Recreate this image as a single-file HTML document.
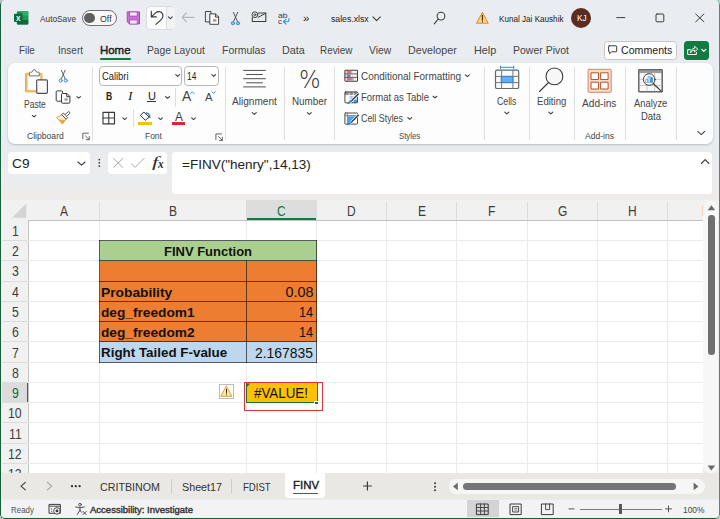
<!DOCTYPE html>
<html lang="en"><head><meta charset="utf-8"><title>sales.xlsx - Excel</title>
<style>
html,body{margin:0;padding:0;}
body{width:720px;height:519px;overflow:hidden;position:relative;background:#c4c6c8;font-family:'Liberation Sans', sans-serif;}
#app{position:absolute;left:0;top:0;width:720px;height:519px;overflow:hidden;border-radius:4.5px;background:#e9edf1;}
.sec{position:absolute;left:0;top:0;width:720px;height:519px;}
.b{position:absolute;box-sizing:border-box;}
.t{position:absolute;white-space:nowrap;transform-origin:0 50%;}
svg.ov{position:absolute;left:0;top:0;}
</style></head><body><div id="app">
<div class="sec" id="chrome">
<div class="b " style="left:0px;top:0px;width:720px;height:63px;background:#e9edf1;"></div>
<div class="b " style="left:8px;top:63.3px;width:705.4px;height:81.1px;background:#fdfdfd;border-radius:7px;box-shadow:0 1px 2.5px rgba(0,0,0,.22);"></div>
<div class="b " style="left:0px;top:146px;width:720px;height:54.5px;background:linear-gradient(#e8ebee 0%,#ebecee 55%,#eeece9 100%);"></div>
<div class="b " style="left:0px;top:200.2px;width:720px;height:20.2px;background:#f1f1f1;"></div>
<div class="b " style="left:28.3px;top:220.3px;width:675px;height:253px;background:#ffffff;"></div>
<div class="b " style="left:0px;top:220.3px;width:28.3px;height:253px;background:#f1f1f1;"></div>
</div>
<div class="sec" id="titlebar">
<span class="t" style="left:40.20px;top:12.25px;font-size:9.6px;line-height:13px;color:#333;transform:scaleX(0.8652);">AutoSave</span>
<div class="b " style="left:81.5px;top:9.8px;width:35.8px;height:16.4px;background:#fafafa;border:1px solid #707070;border-radius:9px;"></div>
<div class="b " style="left:84.1px;top:12.8px;width:10.5px;height:10.5px;background:#5f5f5f;border-radius:5.3px;"></div>
<span class="t" style="left:99.80px;top:12.25px;font-size:9.6px;line-height:13px;color:#333;transform:scaleX(0.9188);">Off</span>
<div class="b " style="left:145.8px;top:6.3px;width:29.5px;height:23.4px;background:#fbfcfd;border:1px solid #d9dde1;border-radius:4px;"></div>
<div class="b " style="left:165.5px;top:7.3px;width:9px;height:21.4px;background:#f1f3f5;border-left:1px solid #d9dde1;border-radius:0 3px 3px 0;"></div>
<span class="t" style="left:303.00px;top:12.25px;font-size:10px;line-height:13px;color:#222;transform:scaleX(1.1506);">»</span>
<span class="t" style="left:330.70px;top:12.25px;font-size:9.6px;line-height:13px;color:#222;transform:scaleX(0.9064);">sales.xlsx</span>
<span class="t" style="left:498.80px;top:12.25px;font-size:9.6px;line-height:13px;color:#222;transform:scaleX(0.8457);">Kunal Jai Kaushik</span>
<div class="b " style="left:571.2px;top:8px;width:20px;height:20px;background:#5b2c22;border-radius:10px;"></div>
<span class="t" style="left:576.50px;top:13.25px;font-size:8.2px;line-height:11px;color:#fff;transform:scaleX(1.0039);">KJ</span>
</div>
<div class="sec" id="ribbon-tabs">
<span class="t" style="left:19.20px;top:43.25px;font-size:11px;line-height:14px;color:#454545;transform:scaleX(0.8909);">File</span>
<span class="t" style="left:57.50px;top:43.25px;font-size:11px;line-height:14px;color:#454545;transform:scaleX(0.9086);">Insert</span>
<span class="t" style="left:146.50px;top:43.25px;font-size:11px;line-height:14px;color:#454545;transform:scaleX(0.9356);">Page Layout</span>
<span class="t" style="left:222.00px;top:43.25px;font-size:11px;line-height:14px;color:#454545;transform:scaleX(0.9511);">Formulas</span>
<span class="t" style="left:281.50px;top:43.25px;font-size:11px;line-height:14px;color:#454545;transform:scaleX(0.9806);">Data</span>
<span class="t" style="left:319.80px;top:43.25px;font-size:11px;line-height:14px;color:#454545;transform:scaleX(0.9008);">Review</span>
<span class="t" style="left:369.00px;top:43.25px;font-size:11px;line-height:14px;color:#454545;transform:scaleX(0.9427);">View</span>
<span class="t" style="left:408.00px;top:43.25px;font-size:11px;line-height:14px;color:#454545;transform:scaleX(0.9733);">Developer</span>
<span class="t" style="left:473.70px;top:43.25px;font-size:11px;line-height:14px;color:#454545;transform:scaleX(0.9856);">Help</span>
<span class="t" style="left:512.70px;top:43.25px;font-size:11px;line-height:14px;color:#454545;transform:scaleX(0.9540);">Power Pivot</span>
<span class="t" style="left:100.00px;top:43.25px;font-size:11px;line-height:14px;color:#1f1f1f;transform:scaleX(1.0394);-webkit-text-stroke:0.45px #1f1f1f;">Home</span>
<div class="b " style="left:100px;top:58px;width:30.5px;height:2.3px;background:#107c41;border-radius:1.2px;"></div>
<div class="b " style="left:604px;top:40.6px;width:72.6px;height:19px;background:#fdfdfd;border:1px solid #c6c6c6;border-radius:3.5px;"></div>
<span class="t" style="left:620.70px;top:43.25px;font-size:11.3px;line-height:14px;color:#222;transform:scaleX(0.9391);">Comments</span>
<div class="b " style="left:683.9px;top:40.6px;width:25.6px;height:19px;background:#107c41;border-radius:3.5px;"></div>
</div>
<div class="sec" id="ribbon">
<span class="t" style="left:23.80px;top:98.25px;font-size:10.1px;line-height:13px;color:#454545;transform:scaleX(0.8446);">Paste</span>
<span class="t" style="left:27.00px;top:129.25px;font-size:9.4px;line-height:13px;color:#454545;transform:scaleX(0.9168);">Clipboard</span>
<div class="b " style="left:92.0px;top:67px;width:1px;height:72.5px;background:#dedede;"></div>
<div class="b " style="left:99.1px;top:65.5px;width:82.5px;height:20.2px;background:#fff;border:1px solid #b5b5b5;border-radius:3.8px;"></div>
<div class="b " style="left:184.3px;top:65.5px;width:34.5px;height:20.2px;background:#fff;border:1px solid #b5b5b5;border-radius:3.8px;"></div>
<span class="t" style="left:101.50px;top:69.25px;font-size:10.6px;line-height:14px;color:#222;transform:scaleX(0.8824);">Calibri</span>
<span class="t" style="left:187.00px;top:69.25px;font-size:10.6px;line-height:14px;color:#222;transform:scaleX(0.7883);">14</span>
<span class="t" style="left:106.30px;top:89.25px;font-size:11px;line-height:14px;color:#222;font-weight:700;transform:scaleX(0.7796);">B</span>
<span class="t" style="left:128.00px;top:89.25px;font-size:11.5px;line-height:14px;color:#222;font-family:'Liberation Serif', serif;font-style:italic;transform:scaleX(1.1707);">I</span>
<span class="t" style="left:147.50px;top:89.25px;font-size:10.6px;line-height:14px;color:#222;transform:scaleX(1.0449);">U</span>
<div class="b " style="left:147.2px;top:101.3px;width:8.6px;height:1px;background:#333;"></div>
<div class="b " style="left:174.7px;top:88px;width:1px;height:18.5px;background:#dedede;"></div>
<span class="t" style="left:181.90px;top:86.25px;font-size:15.2px;line-height:19px;color:#444;transform:scaleX(0.9072);">A</span>
<span class="t" style="left:204.80px;top:90.25px;font-size:11.4px;line-height:14px;color:#444;transform:scaleX(0.9856);">A</span>
<div class="b " style="left:133.0px;top:108.8px;width:1px;height:17.799999999999997px;background:#dedede;"></div>
<span class="t" style="left:174.70px;top:109.25px;font-size:12.5px;line-height:16px;color:#3a3a3a;transform:scaleX(0.9468);">A</span>
<div class="b " style="left:171.9px;top:121.8px;width:13.4px;height:2.9px;background:#e3242b;"></div>
<div class="b " style="left:138px;top:121.8px;width:14px;height:2.8px;background:#f4c20d;"></div>
<span class="t" style="left:144.50px;top:129.25px;font-size:9.4px;line-height:13px;color:#454545;transform:scaleX(0.8953);">Font</span>
<div class="b " style="left:225.0px;top:67px;width:1px;height:72.5px;background:#dedede;"></div>
<span class="t" style="left:232.00px;top:95.25px;font-size:10.1px;line-height:13px;color:#454545;">Alignment</span>
<div class="b " style="left:283.9px;top:67px;width:1px;height:72.5px;background:#dedede;"></div>
<span class="t" style="left:291.80px;top:95.25px;font-size:10.1px;line-height:13px;color:#454545;transform:scaleX(0.9748);">Number</span>
<span class="t" style="left:298.60px;top:63.25px;font-size:25.5px;line-height:32px;color:#333;font-weight:200;font-family:'DejaVu Sans', sans-serif;transform:scaleX(0.8913);">%</span>
<div class="b " style="left:333.9px;top:67px;width:1px;height:72.5px;background:#dedede;"></div>
<span class="t" style="left:361.30px;top:70.25px;font-size:10.1px;line-height:13px;color:#454545;transform:scaleX(0.9846);">Conditional Formatting</span>
<span class="t" style="left:361.30px;top:91.25px;font-size:10.1px;line-height:13px;color:#454545;transform:scaleX(0.9420);">Format as Table</span>
<span class="t" style="left:361.30px;top:112.25px;font-size:10.1px;line-height:13px;color:#454545;transform:scaleX(0.8807);">Cell Styles</span>
<span class="t" style="left:398.80px;top:129.25px;font-size:9.4px;line-height:13px;color:#454545;transform:scaleX(0.8304);">Styles</span>
<div class="b " style="left:484.0px;top:67px;width:1px;height:72.5px;background:#dedede;"></div>
<span class="t" style="left:497.30px;top:95.25px;font-size:10.1px;line-height:13px;color:#454545;transform:scaleX(0.8646);">Cells</span>
<div class="b " style="left:528.8px;top:67px;width:1px;height:72.5px;background:#dedede;"></div>
<span class="t" style="left:536.70px;top:95.25px;font-size:10.1px;line-height:13px;color:#454545;transform:scaleX(0.9490);">Editing</span>
<div class="b " style="left:573.5px;top:67px;width:1px;height:72.5px;background:#dedede;"></div>
<span class="t" style="left:582.30px;top:97.25px;font-size:10.1px;line-height:13px;color:#454545;transform:scaleX(1.0048);">Add-ins</span>
<span class="t" style="left:585.00px;top:129.25px;font-size:9.4px;line-height:13px;color:#454545;transform:scaleX(0.9120);">Add-ins</span>
<div class="b " style="left:625.2px;top:67px;width:1px;height:72.5px;background:#dedede;"></div>
<span class="t" style="left:634.00px;top:97.25px;font-size:10.1px;line-height:13px;color:#454545;transform:scaleX(0.9270);">Analyze</span>
<span class="t" style="left:640.70px;top:110.25px;font-size:10.1px;line-height:13px;color:#454545;transform:scaleX(0.9377);">Data</span>
<div class="b " style="left:675.5px;top:67px;width:1px;height:72.5px;background:#dedede;"></div>
</div>
<div class="sec" id="formula-bar">
<div class="b " style="left:8px;top:151.6px;width:82px;height:22.2px;background:#fff;border-radius:3.5px;"></div>
<div class="b " style="left:108px;top:151.6px;width:59.4px;height:22.2px;background:#fff;border-radius:3.5px;"></div>
<div class="b " style="left:172.2px;top:151.6px;width:539.6px;height:42.4px;background:#fff;border-radius:3.5px;"></div>
<span class="t" style="left:11.60px;top:155.25px;font-size:13.4px;line-height:17px;color:#222;transform:scaleX(1.0219);">C9</span>
<span class="t" style="left:182.20px;top:156.25px;font-size:13.4px;line-height:17px;color:#222;transform:scaleX(1.0103);">=FINV(&quot;henry&quot;,14,13)</span>
<span class="t" style="left:152.30px;top:152.25px;font-size:15.5px;line-height:19px;color:#2b2b2b;font-family:'Liberation Serif', serif;font-style:italic;transform:scaleX(1.4841);">f</span>
<span class="t" style="left:158.00px;top:156.25px;font-size:11.8px;line-height:16px;color:#2b2b2b;font-weight:700;font-family:'Liberation Serif', serif;font-style:italic;transform:scaleX(0.9481);">x</span>
</div>
<div class="sec" id="grid">
<div class="b " style="left:246.3px;top:200.3px;width:70.5px;height:20px;background:#dddddd;"></div>
<div class="b " style="left:246.3px;top:218.3px;width:70.5px;height:2.1px;background:#107c41;"></div>
<div class="b " style="left:2px;top:382.40999999999997px;width:26.3px;height:20.27px;background:#dcdcdc;"></div>
<div class="b " style="left:26.8px;top:382.40999999999997px;width:1.6px;height:20.27px;background:#107c41;"></div>
<div class="b " style="left:28.3px;top:219.9px;width:675px;height:1px;background:#c2c2c2;"></div>
<div class="b " style="left:27.8px;top:220.3px;width:1px;height:253px;background:#c4c4c4;"></div>
<div class="b " style="left:99.0px;top:202px;width:1px;height:18px;background:#dcdcdc;"></div>
<div class="b " style="left:245.8px;top:202px;width:1px;height:18px;background:#dcdcdc;"></div>
<div class="b " style="left:316.3px;top:202px;width:1px;height:18px;background:#dcdcdc;"></div>
<div class="b " style="left:386.3px;top:202px;width:1px;height:18px;background:#dcdcdc;"></div>
<div class="b " style="left:456.3px;top:202px;width:1px;height:18px;background:#dcdcdc;"></div>
<div class="b " style="left:526.8px;top:202px;width:1px;height:18px;background:#dcdcdc;"></div>
<div class="b " style="left:597.0px;top:202px;width:1px;height:18px;background:#dcdcdc;"></div>
<div class="b " style="left:667.2px;top:202px;width:1px;height:18px;background:#dcdcdc;"></div>
<div class="b " style="left:99.0px;top:220.5px;width:1px;height:252.5px;background:#ebebeb;"></div>
<div class="b " style="left:245.8px;top:220.5px;width:1px;height:252.5px;background:#ebebeb;"></div>
<div class="b " style="left:316.3px;top:220.5px;width:1px;height:252.5px;background:#ebebeb;"></div>
<div class="b " style="left:386.3px;top:220.5px;width:1px;height:252.5px;background:#ebebeb;"></div>
<div class="b " style="left:456.3px;top:220.5px;width:1px;height:252.5px;background:#ebebeb;"></div>
<div class="b " style="left:526.8px;top:220.5px;width:1px;height:252.5px;background:#ebebeb;"></div>
<div class="b " style="left:597.0px;top:220.5px;width:1px;height:252.5px;background:#ebebeb;"></div>
<div class="b " style="left:667.2px;top:220.5px;width:1px;height:252.5px;background:#ebebeb;"></div>
<div class="b " style="left:28.3px;top:240.02px;width:675px;height:1px;background:#ebebeb;"></div>
<div class="b " style="left:2px;top:240.02px;width:26px;height:1px;background:#dcdcdc;"></div>
<div class="b " style="left:28.3px;top:260.29px;width:675px;height:1px;background:#ebebeb;"></div>
<div class="b " style="left:2px;top:260.29px;width:26px;height:1px;background:#dcdcdc;"></div>
<div class="b " style="left:28.3px;top:280.56px;width:675px;height:1px;background:#ebebeb;"></div>
<div class="b " style="left:2px;top:280.56px;width:26px;height:1px;background:#dcdcdc;"></div>
<div class="b " style="left:28.3px;top:300.83px;width:675px;height:1px;background:#ebebeb;"></div>
<div class="b " style="left:2px;top:300.83px;width:26px;height:1px;background:#dcdcdc;"></div>
<div class="b " style="left:28.3px;top:321.1px;width:675px;height:1px;background:#ebebeb;"></div>
<div class="b " style="left:2px;top:321.1px;width:26px;height:1px;background:#dcdcdc;"></div>
<div class="b " style="left:28.3px;top:341.37px;width:675px;height:1px;background:#ebebeb;"></div>
<div class="b " style="left:2px;top:341.37px;width:26px;height:1px;background:#dcdcdc;"></div>
<div class="b " style="left:28.3px;top:361.64px;width:675px;height:1px;background:#ebebeb;"></div>
<div class="b " style="left:2px;top:361.64px;width:26px;height:1px;background:#dcdcdc;"></div>
<div class="b " style="left:28.3px;top:381.90999999999997px;width:675px;height:1px;background:#ebebeb;"></div>
<div class="b " style="left:2px;top:381.90999999999997px;width:26px;height:1px;background:#dcdcdc;"></div>
<div class="b " style="left:28.3px;top:402.18px;width:675px;height:1px;background:#ebebeb;"></div>
<div class="b " style="left:2px;top:402.18px;width:26px;height:1px;background:#dcdcdc;"></div>
<div class="b " style="left:28.3px;top:422.45px;width:675px;height:1px;background:#ebebeb;"></div>
<div class="b " style="left:2px;top:422.45px;width:26px;height:1px;background:#dcdcdc;"></div>
<div class="b " style="left:28.3px;top:442.72px;width:675px;height:1px;background:#ebebeb;"></div>
<div class="b " style="left:2px;top:442.72px;width:26px;height:1px;background:#dcdcdc;"></div>
<div class="b " style="left:28.3px;top:462.99px;width:675px;height:1px;background:#ebebeb;"></div>
<div class="b " style="left:2px;top:462.99px;width:26px;height:1px;background:#dcdcdc;"></div>
<span class="t" style="left:59.89px;top:202.25px;font-size:14.3px;line-height:18px;color:#3d3d3d;transform:scaleX(0.8400);">A</span>
<span class="t" style="left:168.89px;top:202.25px;font-size:14.3px;line-height:18px;color:#3d3d3d;transform:scaleX(0.8400);">B</span>
<span class="t" style="left:277.21px;top:202.25px;font-size:14.3px;line-height:18px;color:#107c41;transform:scaleX(0.8400);">C</span>
<span class="t" style="left:347.46px;top:202.25px;font-size:14.3px;line-height:18px;color:#3d3d3d;transform:scaleX(0.8400);">D</span>
<span class="t" style="left:417.79px;top:202.25px;font-size:14.3px;line-height:18px;color:#3d3d3d;transform:scaleX(0.8400);">E</span>
<span class="t" style="left:488.38px;top:202.25px;font-size:14.3px;line-height:18px;color:#3d3d3d;transform:scaleX(0.8400);">F</span>
<span class="t" style="left:557.73px;top:202.25px;font-size:14.3px;line-height:18px;color:#3d3d3d;transform:scaleX(0.8400);">G</span>
<span class="t" style="left:628.26px;top:202.25px;font-size:14.3px;line-height:18px;color:#3d3d3d;transform:scaleX(0.8400);">H</span>
<span class="t" style="left:11.58px;top:222.25px;font-size:14.3px;line-height:18px;color:#3d3d3d;transform:scaleX(0.8600);">1</span>
<span class="t" style="left:11.58px;top:242.25px;font-size:14.3px;line-height:18px;color:#3d3d3d;transform:scaleX(0.8600);">2</span>
<span class="t" style="left:11.58px;top:262.25px;font-size:14.3px;line-height:18px;color:#3d3d3d;transform:scaleX(0.8600);">3</span>
<span class="t" style="left:11.58px;top:283.25px;font-size:14.3px;line-height:18px;color:#3d3d3d;transform:scaleX(0.8600);">4</span>
<span class="t" style="left:11.58px;top:303.25px;font-size:14.3px;line-height:18px;color:#3d3d3d;transform:scaleX(0.8600);">5</span>
<span class="t" style="left:11.58px;top:323.25px;font-size:14.3px;line-height:18px;color:#3d3d3d;transform:scaleX(0.8600);">6</span>
<span class="t" style="left:11.58px;top:344.25px;font-size:14.3px;line-height:18px;color:#3d3d3d;transform:scaleX(0.8600);">7</span>
<span class="t" style="left:11.58px;top:364.25px;font-size:14.3px;line-height:18px;color:#3d3d3d;transform:scaleX(0.8600);">8</span>
<span class="t" style="left:11.58px;top:384.25px;font-size:14.3px;line-height:18px;color:#0e6b38;transform:scaleX(0.8600);">9</span>
<span class="t" style="left:8.16px;top:404.25px;font-size:14.3px;line-height:18px;color:#3d3d3d;transform:scaleX(0.8600);">10</span>
<span class="t" style="left:8.62px;top:425.25px;font-size:14.3px;line-height:18px;color:#3d3d3d;transform:scaleX(0.8600);">11</span>
<span class="t" style="left:8.16px;top:445.25px;font-size:14.3px;line-height:18px;color:#3d3d3d;transform:scaleX(0.8600);">12</span>
<span class="t" style="left:8.16px;top:465.25px;font-size:14.3px;line-height:18px;color:#3d3d3d;transform:scaleX(0.8600);">13</span>
<div class="b " style="left:99.5px;top:240.52px;width:217.3px;height:20.27px;background:#a9d08e;"></div>
<div class="b " style="left:99.5px;top:260.79px;width:217.3px;height:81.08px;background:#ed7d31;"></div>
<div class="b " style="left:99.5px;top:341.87px;width:217.3px;height:20.27px;background:#bdd7ee;"></div>
<div class="b " style="left:99.0px;top:240.02px;width:218.3px;height:1px;background:rgba(20,20,20,0.68);"></div>
<div class="b " style="left:99.0px;top:260.29px;width:218.3px;height:1px;background:rgba(20,20,20,0.68);"></div>
<div class="b " style="left:99.0px;top:280.56px;width:218.3px;height:1px;background:rgba(20,20,20,0.68);"></div>
<div class="b " style="left:99.0px;top:300.83px;width:218.3px;height:1px;background:rgba(20,20,20,0.68);"></div>
<div class="b " style="left:99.0px;top:321.1px;width:218.3px;height:1px;background:rgba(20,20,20,0.68);"></div>
<div class="b " style="left:99.0px;top:341.37px;width:218.3px;height:1px;background:rgba(20,20,20,0.68);"></div>
<div class="b " style="left:99.0px;top:361.64px;width:218.3px;height:1px;background:rgba(20,20,20,0.68);"></div>
<div class="b " style="left:99.0px;top:240.02px;width:1px;height:122.62px;background:rgba(20,20,20,0.68);"></div>
<div class="b " style="left:316.3px;top:240.02px;width:1px;height:122.62px;background:rgba(20,20,20,0.68);"></div>
<div class="b " style="left:245.8px;top:260.29px;width:1px;height:102.35px;background:rgba(20,20,20,0.68);"></div>
<span class="t" style="left:163.70px;top:243.25px;font-size:13.6px;line-height:17px;color:#111;font-weight:700;transform:scaleX(0.9552);">FINV Function</span>
<span class="t" style="left:101.20px;top:284.25px;font-size:13.6px;line-height:17px;color:#111;font-weight:700;transform:scaleX(1.0135);">Probability</span>
<span class="t" style="left:101.20px;top:304.25px;font-size:13.6px;line-height:17px;color:#111;font-weight:700;transform:scaleX(1.0073);">deg_freedom1</span>
<span class="t" style="left:101.20px;top:324.25px;font-size:13.6px;line-height:17px;color:#111;font-weight:700;transform:scaleX(1.0073);">deg_freedom2</span>
<span class="t" style="left:101.20px;top:344.25px;font-size:13.6px;line-height:17px;color:#111;font-weight:700;transform:scaleX(0.9847);">Right Tailed F-value</span>
<span class="t" style="left:285.60px;top:283.25px;font-size:14.4px;line-height:18px;color:#111;">0.08</span>
<span class="t" style="left:299.10px;top:303.25px;font-size:14.4px;line-height:18px;color:#111;transform:scaleX(0.8741);">14</span>
<span class="t" style="left:299.10px;top:323.25px;font-size:14.4px;line-height:18px;color:#111;transform:scaleX(0.8741);">14</span>
<span class="t" style="left:255.30px;top:344.25px;font-size:14.4px;line-height:18px;color:#111;transform:scaleX(0.9662);">2.167835</span>
<div class="b " style="left:246.3px;top:382.40999999999997px;width:70.5px;height:20.27px;background:#ffc000;"></div>
<div class="b " style="left:245.5px;top:381.60999999999996px;width:72.1px;height:21.87px;border:1.5px solid #1a6f3f;"></div>
<div class="b " style="left:314.3px;top:400.8px;width:4.6px;height:4.6px;background:#107c41;border:1px solid #fff;"></div>
<span class="t" style="left:254.00px;top:384.25px;font-size:14.1px;line-height:18px;color:#111;transform:scaleX(0.9484);">#VALUE!</span>
<div class="b " style="left:244.2px;top:381.5px;width:79px;height:29.9px;border:1.7px solid #d8363c;"></div>
<div class="b " style="left:218.6px;top:383.6px;width:15.8px;height:15.6px;background:#fff;border:1px solid #bcbcbc;"></div>
<div class="b " style="left:703px;top:200.5px;width:14.8px;height:272.8px;background:#f7f7f7;border-radius:7px;"></div>
<div class="b " style="left:708.3px;top:215.2px;width:6.6px;height:140px;background:#6f6f6f;border-radius:3.3px;"></div>
</div>
<div class="sec" id="sheet-tabs">
<div class="b " style="left:0px;top:473.3px;width:720px;height:26.2px;background:#eae8e4;"></div>
<div class="b " style="left:0px;top:499.5px;width:720px;height:19.5px;background:#f3f3f3;"></div>
<span class="t" style="left:100.00px;top:479.25px;font-size:11.8px;line-height:16px;color:#333;transform:scaleX(0.9063);">CRITBINOM</span>
<span class="t" style="left:181.50px;top:479.25px;font-size:11.8px;line-height:16px;color:#333;transform:scaleX(0.9101);">Sheet17</span>
<span class="t" style="left:243.30px;top:479.25px;font-size:11.8px;line-height:16px;color:#333;transform:scaleX(0.8099);">FDIST</span>
<div class="b " style="left:170.8px;top:478.8px;width:1px;height:15px;background:#cfcfcf;"></div>
<div class="b " style="left:230.9px;top:478.8px;width:1px;height:15px;background:#cfcfcf;"></div>
<div class="b " style="left:285px;top:473px;width:40px;height:24.6px;background:#fff;border-radius:0 0 4px 4px;"></div>
<span class="t" style="left:292.60px;top:477.25px;font-size:11.8px;line-height:16px;color:#1a1a1a;transform:scaleX(0.9674);-webkit-text-stroke:0.4px #1a1a1a;">FINV</span>
<div class="b " style="left:293px;top:492.5px;width:25.2px;height:1.8px;background:#107c41;border-radius:0.9px;"></div>
<div class="b " style="left:448.7px;top:479px;width:256.5px;height:15px;background:#f6f6f6;border-radius:7.5px;"></div>
<div class="b " style="left:462.8px;top:482.7px;width:213.7px;height:7.4px;background:#757575;border-radius:3.7px;"></div>
</div>
<div class="sec" id="status-bar">
<span class="t" style="left:10.80px;top:504.25px;font-size:9.3px;line-height:12px;color:#555;transform:scaleX(0.8558);">Ready</span>
<span class="t" style="left:89.60px;top:504.25px;font-size:9.3px;line-height:12px;color:#333;transform:scaleX(1.0222);-webkit-text-stroke:0.4px #333;">Accessibility: Investigate</span>
<div class="b " style="left:466.5px;top:500px;width:32px;height:18px;background:#d4d4d4;"></div>
<span class="t" style="left:682.50px;top:503.25px;font-size:9.4px;line-height:13px;color:#444;transform:scaleX(0.8964);">100%</span>
<div class="b " style="left:580px;top:508.7px;width:81.5px;height:1px;background:#7a7a7a;"></div>
<div class="b " style="left:618.5px;top:503.8px;width:3.2px;height:10.6px;background:#585858;"></div>
</div>
<div class="sec" id="window-frame">
<div class="b " style="left:0px;top:0px;width:720px;height:519px;border:1.2px solid #17603a;border-radius:4.5px;border-top:none;border-right-color:#3f946a;box-shadow:inset 1px 0 0 rgba(225,247,236,.9),inset 0 -1px 0 rgba(225,247,236,.9);pointer-events:none;"></div>
</div>
<svg class="ov" width="720" height="519" viewBox="0 0 720 519" fill="none" stroke-linecap="round" stroke-linejoin="round">
<path d="M26.3 203.5 V217.8 H12 Z" fill="#d4d4d4" stroke="none"/>
<path d="M246.9 383.4 H250.4 L246.9 386.9 Z" fill="#107c41" stroke="none"/>
<path d="M707.6 210.2 L711.4 205.2 L715.2 210.2 Z" fill="#6a6a6a" stroke="none"/>
<path d="M707.6 465.5 L711.4 470.5 L715.2 465.5 Z" fill="#6a6a6a" stroke="none"/>
<path d="M457.8 482.6 L453 486.4 L457.8 490.2 Z" fill="#6a6a6a" stroke="none"/>
<path d="M693.6 482.6 L698.4 486.4 L693.6 490.2 Z" fill="#6a6a6a" stroke="none"/>
<g stroke="none">
<rect x="16.9" y="11.3" width="11.4" height="13.2" rx="1" fill="#1a8f52"/>
<rect x="22.6" y="11.3" width="5.7" height="4.4" fill="#2fae71"/>
<rect x="22.6" y="15.7" width="5.7" height="4.4" fill="#1f9a5d"/>
<rect x="16.9" y="20.1" width="11.4" height="4.4" rx="1" fill="#14663a"/>
<rect x="16.9" y="15.7" width="5.7" height="4.4" fill="#117a41"/>
<rect x="14" y="13.7" width="8.3" height="8.2" rx="0.9" fill="#0d6d39"/>
<text x="15.95" y="20.55" font-family="Liberation Sans, sans-serif" font-weight="700" font-size="7.2" fill="#fff" textLength="4.5" lengthAdjust="spacingAndGlyphs">X</text>
</g>
<g><path d="M127.6 11.9 H139.5 V23.9 H129.4 L127.6 22.1 Z" fill="#c96fd6" stroke="#a640b8" stroke-width="1"/>
<rect x="130" y="12" width="7.2" height="4" fill="#f8ecfa" stroke="#a640b8" stroke-width="0.7"/>
<rect x="130" y="20" width="7.2" height="4" fill="#f8ecfa" stroke="#a640b8" stroke-width="0.7"/></g>
<path d="M151.3 11.2 V16.9 H156.3 M151.6 16.6 L155.6 12.9 C158 10.8 161.6 11.3 162.7 14.2 C163.6 16.8 162.2 18.6 160.6 20.1 L155.9 24.4" stroke="#3b3b3b" stroke-width="1.15"/>
<path d="M168.4 16.9 L170.3 18.6 L172.2 16.9" stroke="#3b3b3b" stroke-width="1.1"/>
<path d="M194 17.4 H182.3 M186.4 13 L182.1 17.4 L186.4 21.8" stroke="#b3b6b9" stroke-width="1.1"/>
<path d="M209.6 21.9 H205.4 V11.5 H211 V13.4" stroke="#3b3b3b" stroke-width="0.95" stroke-linejoin="miter"/>
<path d="M210.2 13.9 H215.6 L218.6 16.9 V24.3 H210.2 Z M215.4 14.1 V17.1 H218.4" stroke="#3b3b3b" stroke-width="0.95" fill="#fdfdfd" stroke-linejoin="miter"/>
<rect x="213" y="19.2" width="3.4" height="2.4" fill="#9a9a9a" stroke="none"/>
<path d="M233.4 12.4 L237.6 21.7 M237.7 12.4 L233.5 21.7" stroke="#4a4a4a" stroke-width="0.95"/>
<circle cx="232.9" cy="23.2" r="1.6" fill="#8ec6ee" stroke="#3f8fd0" stroke-width="1"/>
<circle cx="238" cy="23.2" r="1.6" fill="#8ec6ee" stroke="#3f8fd0" stroke-width="1"/>
<path d="M258.3 12.9 H265.8 V21.4 H252.3 V17.6" stroke="#3b3b3b" stroke-width="1.05" stroke-linejoin="miter"/>
<path d="M258.2 17.3 L265.2 13.5" stroke="#3b3b3b" stroke-width="1"/>
<circle cx="254.9" cy="14.7" r="2.9" stroke="#3b3b3b" stroke-width="0.95"/>
<circle cx="254.8" cy="14.8" r="1" stroke="#3b3b3b" stroke-width="0.8"/>
<text x="278" y="17.7" font-family="Liberation Sans, sans-serif" font-size="8" fill="#3b3b3b" stroke="none" textLength="9.6" lengthAdjust="spacingAndGlyphs">ab</text>
<text x="278" y="24" font-family="Liberation Sans, sans-serif" font-size="8" fill="#3b3b3b" stroke="none">c</text>
<path d="M288.9 18.6 V20.2 Q288.9 21.7 287.4 21.7 H283.8 M285.9 19.4 L283.5 21.7 L285.9 24.1" stroke="#2f8fd8" stroke-width="1.15"/>
<path d="M372.9 16.9 L376.6 20.7 L380.3 16.9" stroke="#3b3b3b" stroke-width="1.1"/>
<circle cx="441" cy="16.1" r="3.9" stroke="#3b3b3b" stroke-width="1.05"/><path d="M438.2 19 L434.3 23.8" stroke="#3b3b3b" stroke-width="1.15"/>
<path d="M482.4 12.6 L488.2 23.2 H476.6 Z" fill="#fbd48a" stroke="#e48f2c" stroke-width="1.1"/>
<path d="M482.4 15.4 V20.2" stroke="#3b2a14" stroke-width="1.1"/><circle cx="482.4" cy="21.9" r="0.65" fill="#3b2a14" stroke="none"/>
<path d="M616.7 17.6 H624.8" stroke="#3b3b3b" stroke-width="1"/>
<rect x="656" y="14" width="7.8" height="7.8" rx="1" stroke="#3b3b3b" stroke-width="1"/>
<path d="M695.7 14 L703.9 21.8 M703.9 14 L695.7 21.8" stroke="#3b3b3b" stroke-width="1"/>
<path d="M609.3 45.8 H616 Q616.7 45.8 616.7 46.5 V51.1 Q616.7 51.8 616 51.8 H611.6 L609.6 53.7 V51.8 H609.3 Q608.6 51.8 608.6 51.1 V46.5 Q608.6 45.8 609.3 45.8 Z" stroke="#3b3b3b" stroke-width="1"/>
<path d="M690.3 49.6 H688.4 Q687.6 49.6 687.6 50.4 V53.7 Q687.6 54.5 688.4 54.5 H695.6 Q696.4 54.5 696.4 53.7 V52.6" stroke="#fff" stroke-width="1.1"/>
<path d="M690.6 52.6 Q690.8 48.6 694.6 48.4 V46.3 L697.8 49.1 L694.6 51.9 V50 Q692 50 690.6 52.6 Z" stroke="#fff" stroke-width="0.9"/>
<path d="M701.7 49.4 L703.8 51.4 L705.9 49.4" stroke="#fff" stroke-width="1.2"/>
<rect x="26.4" y="74" width="15" height="17.3" rx="0.8" fill="#fefefe" stroke="#edbd66" stroke-width="2.4"/>
<path d="M25.7 73.4 V92" stroke="#e2a53c" stroke-width="0.9" stroke-linecap="butt"/>
<path d="M29.4 75.5 V73 Q29.4 72.2 30.2 72.2 H31.6 Q32.3 72.2 32.5 71.4 Q32.9 69.5 34.3 69.5 Q35.7 69.5 36.1 71.4 Q36.3 72.2 37 72.2 H38.5 Q39.3 72.2 39.3 73 V75.5 Z" fill="#fdfdfd" stroke="#737373" stroke-width="1"/>
<rect x="36.7" y="79.8" width="10.7" height="13.5" rx="1" fill="#fafafa" stroke="#4f4f4f" stroke-width="1.15"/>
<path d="M32.35 115.45 L34.10 116.95 L35.85 115.45" stroke="#3b3b3b" stroke-width="1.05"/>
<path d="M61.4 70.3 L65.2 78.9 M65.1 70.3 L61.3 78.9" stroke="#505050" stroke-width="0.9"/>
<circle cx="60.7" cy="80.5" r="1.6" fill="#f4faff" stroke="#3f88c5" stroke-width="1"/>
<circle cx="65.8" cy="80.5" r="1.6" fill="#f4faff" stroke="#3f88c5" stroke-width="1"/>
<path d="M60.6 101.2 H57.1 Q56.2 101.2 56.2 100.3 V91.8 Q56.2 90.9 57.1 90.9 H61.7 Q62.6 90.9 62.6 91.8 V92.6" stroke="#3b3b3b" stroke-width="1"/>
<path d="M61.5 94.4 Q61.5 93.5 62.4 93.5 H66.9 L69.9 96.5 V102.3 Q69.9 103.2 69 103.2 H62.4 Q61.5 103.2 61.5 102.3 Z M66.7 93.7 V96.7 H69.7" stroke="#3b3b3b" stroke-width="1" fill="#fdfdfd"/>
<rect x="64.5" y="98.3" width="3.2" height="2.3" fill="#9a9a9a" stroke="none"/>
<path d="M76.95 96.55 L78.70 98.05 L80.45 96.55" stroke="#3b3b3b" stroke-width="1.05"/>
<path d="M57 117.3 L62.4 114.7 L66.2 118.9 L62.6 123.6 Z" fill="#fdf1dd" stroke="#eb9a38" stroke-width="0.9"/>
<path d="M59.3 119.9 L65 120.4 L62.6 123.6 Z" fill="#f0a040" stroke="#eb9a38" stroke-width="0.6"/>
<path d="M62 114.3 L63.4 113 L67.7 117.6 L66.4 119 Z" fill="#fff" stroke="#444" stroke-width="0.9"/>
<path d="M65.2 114.6 L67.9 111.9 Q68.8 111.2 69.5 112 Q70.1 112.8 69.4 113.6 L66.7 116.3" fill="#fff" stroke="#444" stroke-width="0.9"/>
<path d="M82.8 138.79999999999998 V133.2 H88.39999999999999" stroke="#555" stroke-width="0.9"/><path d="M85.39999999999999 135.79999999999998 L89.1 139.5 M89.3 136.6 V139.7 H86.2" stroke="#555" stroke-width="0.9"/>
<path d="M215.9 139.5 V133.9 H221.5" stroke="#555" stroke-width="0.9"/><path d="M218.5 136.5 L222.20000000000002 140.20000000000002 M222.4 137.3 V140.4 H219.3" stroke="#555" stroke-width="0.9"/>
<path d="M175.75 74.65 L177.70 76.35 L179.65 74.65" stroke="#3b3b3b" stroke-width="1.05"/>
<path d="M211.85 74.65 L213.75 76.35 L215.65 74.65" stroke="#3b3b3b" stroke-width="1.05"/>
<path d="M165.45 96.55 L167.55 98.25 L169.65 96.55" stroke="#3b3b3b" stroke-width="1.05"/>
<path d="M190.6 93.5 L192.3 91.8 L194 93.5" stroke="#3a8ad4" stroke-width="1"/>
<path d="M211.9 91.7 L213.6 93.4 L215.3 91.7" stroke="#3a8ad4" stroke-width="1"/>
<rect x="103" y="112.3" width="11.5" height="11.5" stroke="#3b3b3b" stroke-width="1.15"/><path d="M108.75 112.3 V123.8 M103 118.05 H114.5" stroke="#3b3b3b" stroke-width="1.05"/>
<path d="M122.85 117.85 L124.75 119.55 L126.65 117.85" stroke="#3b3b3b" stroke-width="1.05"/>
<path d="M144.2 112.4 L149.2 117.1 L145.3 120.3 L140.6 115.6 Z" fill="#fafafa" stroke="#3b3b3b" stroke-width="1"/>
<path d="M146.2 113 Q149.6 113.2 149.9 117.6" stroke="#2b7cd3" stroke-width="1.3"/>
<path d="M158.65 117.85 L160.55 119.55 L162.45 117.85" stroke="#3b3b3b" stroke-width="1.05"/>
<path d="M191.65 117.85 L193.55 119.55 L195.45 117.85" stroke="#3b3b3b" stroke-width="1.05"/>
<path d="M243.2 70.4 H265.8" stroke="#4f4f4f" stroke-width="1" stroke-linecap="butt"/>
<path d="M246.2 74.5 H262.8" stroke="#4f4f4f" stroke-width="1" stroke-linecap="butt"/>
<path d="M243.2 78.7 H265.8" stroke="#4f4f4f" stroke-width="1" stroke-linecap="butt"/>
<path d="M246.2 82.8 H262.8" stroke="#4f4f4f" stroke-width="1" stroke-linecap="butt"/>
<path d="M243.2 86.9 H265.8" stroke="#4f4f4f" stroke-width="1" stroke-linecap="butt"/>
<path d="M252.35 112.65 L254.30 114.35 L256.25 112.65" stroke="#3b3b3b" stroke-width="1.05"/>
<path d="M307.35 112.65 L309.30 114.35 L311.25 112.65" stroke="#3b3b3b" stroke-width="1.05"/>
<g><rect x="344.9" y="70.2" width="12.6" height="11" fill="#fff" stroke="none"/>
<rect x="347.6" y="71" width="4" height="2.6" fill="#ee6a6e" stroke="none"/>
<rect x="347.6" y="74.5" width="2.9" height="2.5" fill="#4a86d0" stroke="none"/>
<rect x="347.6" y="77.9" width="6" height="2.6" fill="#ee6a6e" stroke="none"/>
<path d="M352.3 70.2 V81.2 M355 70.2 V81.2" stroke="#cfcfcf" stroke-width="0.7"/>
<path d="M347.2 70.2 V81.2" stroke="#b9474c" stroke-width="0.8"/>
<path d="M344.9 73.9 H357.5 M344.9 77.4 H357.5" stroke="#555" stroke-width="0.9"/>
<rect x="344.9" y="70.2" width="12.6" height="11" rx="0.6" stroke="#444" stroke-width="1.1"/></g>
<path d="M465.35 74.85 L467.35 76.55 L469.35 74.85" stroke="#3b3b3b" stroke-width="1.05"/>
<g><rect x="344.9" y="91.9" width="12.6" height="10.9" fill="#fff" stroke="none"/>
<rect x="344.9" y="91.9" width="12.6" height="3.4" fill="#8a8a8a" stroke="none"/>
<rect x="349.2" y="95.5" width="8.3" height="3.6" fill="#9fcbf1" stroke="none"/>
<rect x="349.2" y="99.1" width="8.3" height="3.7" fill="#3d96e0" stroke="none"/>
<path d="M349.1 91.9 V102.8 M353.3 91.9 V102.8 M344.9 95.4 H357.5 M344.9 99.1 H357.5" stroke="#fff" stroke-width="0.8"/>
<rect x="344.9" y="91.9" width="12.6" height="10.9" rx="0.6" stroke="#4a4a4a" stroke-width="1"/>
<path d="M358 94.3 L350.2 102" stroke="#fff" stroke-width="3"/>
<path d="M358.3 94 L351.3 101" stroke="#3b3b3b" stroke-width="1.5"/>
<path d="M351.3 101 L348.2 103.2" stroke="#2f80cf" stroke-width="1.7"/></g>
<path d="M433.05 96.25 L434.95 97.95 L436.85 96.25" stroke="#3b3b3b" stroke-width="1.05"/>
<g><rect x="344.9" y="113" width="12.6" height="11.1" rx="0.6" fill="#fff" stroke="#4a4a4a" stroke-width="1"/>
<path d="M347.4 113 V124.1 M344.9 115.6 H357.5" stroke="#6a6a6a" stroke-width="0.8"/>
<path d="M348 116.2 H356.2 V117 L349.4 123.6 H348 Z" fill="#4c9fe6" stroke="none"/>
<path d="M358 115.5 L350.2 123.2" stroke="#fff" stroke-width="2.6"/>
<path d="M358.3 115.2 L351.3 122.2" stroke="#3b3b3b" stroke-width="1.5"/>
<path d="M351.3 122.2 L348.2 124.4" stroke="#2f80cf" stroke-width="1.7"/></g>
<path d="M407.85 117.65 L409.75 119.35 L411.65 117.65" stroke="#3b3b3b" stroke-width="1.05"/>
<path d="M500.5 67.3 H513.7 M500.5 66.1 V68.5 M513.7 66.1 V68.5" stroke="#2f8fd8" stroke-width="1"/>
<rect x="495.5" y="70.2" width="23.2" height="18.3" rx="1.6" fill="#fafafa" stroke="#666" stroke-width="1.2"/>
<path d="M501.6 70.2 V88.5 M512.9 70.2 V88.5 M495.5 76.4 H518.7 M495.5 82.6 H518.7" stroke="#777" stroke-width="1"/>
<rect x="501.6" y="76.4" width="11.3" height="6.2" fill="#62aef0" stroke="#2f80cf" stroke-width="1"/>
<path d="M504.75 112.05 L506.80 113.85 L508.85 112.05" stroke="#3b3b3b" stroke-width="1.05"/>
<circle cx="554.4" cy="76.4" r="8.4" fill="#f7f7f7" stroke="#3b3b3b" stroke-width="1.1"/><path d="M548.6 82.5 L539.5 91.5" stroke="#3b3b3b" stroke-width="1.15"/>
<path d="M548.75 112.05 L550.80 113.85 L552.85 112.05" stroke="#3b3b3b" stroke-width="1.05"/>
<rect x="588.1" y="69.3" width="23.1" height="23" rx="1" fill="#f8d9cb" stroke="#dc8562" stroke-width="1"/>
<rect x="591.4" y="72.8" width="7.1" height="6.7" fill="#fff" stroke="#b4552f" stroke-width="1"/>
<rect x="601" y="72.8" width="7.1" height="6.7" fill="#fff" stroke="#b4552f" stroke-width="1"/>
<rect x="591.4" y="82.2" width="7.1" height="6.8" fill="#fff" stroke="#b4552f" stroke-width="1"/>
<rect x="601" y="82.2" width="7.1" height="6.8" fill="#fff" stroke="#b4552f" stroke-width="1"/>
<rect x="639.2" y="69.7" width="23" height="22.1" fill="#fafafa" stroke="#5d5d5d" stroke-width="1"/>
<rect x="639.2" y="69.7" width="23" height="3.4" fill="#9c9c9c" stroke="none"/>
<path d="M639.2 79.3 H662.2 M639.2 85.5 H662.2 M646.9 73 V91.8 M654.6 73 V91.8" stroke="#c4c4c4" stroke-width="0.9"/>
<rect x="639.2" y="69.7" width="23" height="22.1" stroke="#5d5d5d" stroke-width="1"/>
<circle cx="649.2" cy="79.5" r="5.8" fill="#fff" stroke="#3b3b3b" stroke-width="1"/>
<path d="M653.4 83.7 L661.8 91.6" stroke="#3b3b3b" stroke-width="1.2"/>
<rect x="646.1" y="79.3" width="1.7" height="3" fill="#fff" stroke="#2f80cf" stroke-width="0.6"/>
<rect x="648.4" y="76.4" width="1.7" height="5.9" fill="#fff" stroke="#2f80cf" stroke-width="0.6"/>
<rect x="650.7" y="77.4" width="1.9" height="4.9" fill="#3d96e0" stroke="#2f80cf" stroke-width="0.6"/>
<path d="M697.75 131.45 L701.20 134.55 L704.65 131.45" stroke="#3b3b3b" stroke-width="1.05"/>
<path d="M77.95 162.05 L81.50 165.15 L85.05 162.05" stroke="#3b3b3b" stroke-width="1.15"/>
<rect x="98.5" y="158.85" width="1.6" height="1.5" fill="#3a3a3a" stroke="none"/>
<rect x="98.5" y="162.05" width="1.6" height="1.5" fill="#3a3a3a" stroke="none"/>
<rect x="98.5" y="165.35" width="1.6" height="1.5" fill="#3a3a3a" stroke="none"/>
<path d="M113.6 158.4 L122.8 167.4 M122.8 158.4 L113.6 167.4" stroke="#a9a9a9" stroke-width="1"/>
<path d="M131.4 163.8 L135.2 167.4 L144.2 158.3" stroke="#a9a9a9" stroke-width="1"/>
<path d="M701.4 163.5 L705.15 159.7 L708.9 163.5" stroke="#3b3b3b" stroke-width="1.1"/>
<path d="M226.5 386.2 L231.8 396.3 H221.2 Z" fill="#fde8a8" stroke="#e09a2b" stroke-width="1"/>
<path d="M226.5 389.2 V393.2" stroke="#3b2a14" stroke-width="1"/><circle cx="226.5" cy="394.8" r="0.55" fill="#3b2a14" stroke="none"/>
<path d="M702.7 206 V215.5" stroke="#f0c9a8" stroke-width="0.8"/>
<path d="M25.4 482.4 L21 486.1 L25.4 489.8" stroke="#3b3b3b" stroke-width="1.1"/>
<path d="M47.4 482.4 L51.8 486.1 L47.4 489.8" stroke="#a3a3a3" stroke-width="1.1"/>
<circle cx="72" cy="486.2" r="1.15" fill="#333" stroke="none"/>
<circle cx="75.8" cy="486.2" r="1.15" fill="#333" stroke="none"/>
<circle cx="79.6" cy="486.2" r="1.15" fill="#333" stroke="none"/>
<path d="M363 486 H371.8 M367.4 481.6 V490.4" stroke="#3b3b3b" stroke-width="1.2" stroke-linecap="butt"/>
<rect x="434.2" y="482.4" width="1.7" height="1.7" fill="#333" stroke="none"/>
<rect x="434.2" y="485.9" width="1.7" height="1.7" fill="#333" stroke="none"/>
<rect x="434.2" y="489.4" width="1.7" height="1.7" fill="#333" stroke="none"/>
<rect x="49.4" y="504.4" width="10.9" height="8.9" stroke="#3b3b3b" stroke-width="1"/><path d="M49.4 506.2 H60.3" stroke="#3b3b3b" stroke-width="0.9"/>
<circle cx="57" cy="510.9" r="3.3" fill="#f3f3f3" stroke="#3b3b3b" stroke-width="0.9"/><circle cx="57" cy="510.9" r="1.4" fill="#3b3b3b" stroke="none"/>
<circle cx="51.6" cy="508.9" r="0.55" fill="#3b3b3b" stroke="none"/><circle cx="51.6" cy="511.3" r="0.55" fill="#3b3b3b" stroke="none"/>
<circle cx="80" cy="504.7" r="1.35" stroke="#3b3b3b" stroke-width="0.85"/>
<path d="M75.6 507 Q80 508.6 84.4 507 M80 507.8 V510.2 M80 510.2 L77.3 514.4 M80 510.2 L81.6 512.4" stroke="#3b3b3b" stroke-width="0.9"/>
<path d="M83 511.4 L86.2 514.6 M86.2 511.4 L83 514.6" stroke="#3b3b3b" stroke-width="0.9"/>
<rect x="476.8" y="504" width="11.4" height="10.6" stroke="#3b3b3b" stroke-width="1"/><path d="M480.6 504 V514.6 M484.4 504 V514.6 M476.8 507.5 H488.2 M476.8 511 H488.2" stroke="#3b3b3b" stroke-width="0.9"/>
<rect x="510.4" y="504" width="10.8" height="10.6" stroke="#3b3b3b" stroke-width="1"/><rect x="513" y="506.6" width="5.6" height="5.4" stroke="#3b3b3b" stroke-width="0.9"/><path d="M514.6 508.5 H517 M514.6 510.2 H517" stroke="#3b3b3b" stroke-width="0.6"/>
<rect x="541.8" y="504" width="11.4" height="10.6" stroke="#3b3b3b" stroke-width="1"/><path d="M545.6 504 V509.6 H549.6 V504" stroke="#3b3b3b" stroke-width="0.9"/>
<path d="M569 508.9 H574" stroke="#555" stroke-width="1"/>
<path d="M665.5 508.9 H671.5 M668.5 505.9 V511.9" stroke="#555" stroke-width="1"/>
</svg>
</div></body></html>
